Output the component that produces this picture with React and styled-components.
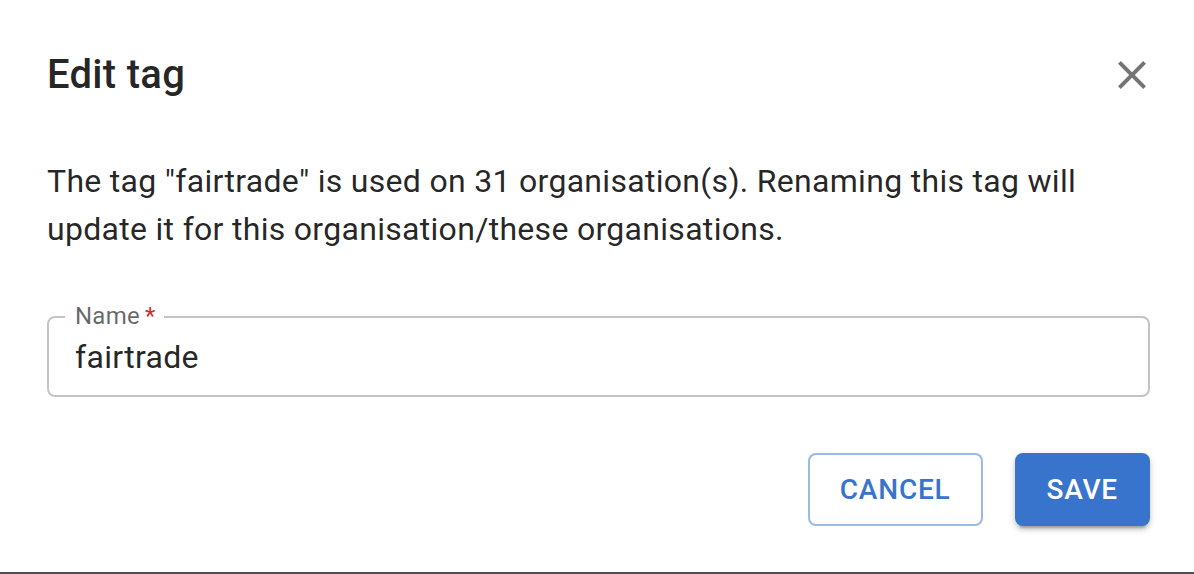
import styled, { createGlobalStyle } from 'styled-components';

const GlobalStyle = createGlobalStyle`
  body {
    margin: 0;
    background: #fff;
    font-family: Roboto, "Liberation Sans", Arial, sans-serif;
  }
`

const Dialog = styled.div`
  box-sizing: border-box;
  width: 1194px;
  height: 574px;
  padding: 43px 44px 0 47px;
  background: #fff;
  border-bottom: 2px solid #4d4d4d;
  display: flex;
  flex-direction: column;
`

const Header = styled.div`
  display: flex;
  align-items: center;
  justify-content: space-between;
  height: 64px;
`

const Title = styled.h2`
  margin: 0;
  font-size: 40px;
  font-weight: 500;
  line-height: 64px;
  letter-spacing: 0.0075em;
  color: rgba(0, 0, 0, 0.87);
`

const CloseButton = styled.button`
  width: 48px;
  height: 48px;
  margin-right: -6px;
  padding: 0;
  border: none;
  background: none;
  color: #757575;
  display: flex;
  align-items: center;
  justify-content: center;
  cursor: pointer;
`

const Message = styled.p`
  margin: 50px 0 0;
  font-size: 32px;
  line-height: 48px;
  letter-spacing: 0.00938em;
  color: rgba(0, 0, 0, 0.87);
`

const Field = styled.div`
  position: relative;
  margin-top: 64px;
  height: 80px;
`

const Outline = styled.fieldset`
  position: absolute;
  inset: -10px 0 0 0;
  margin: 0;
  padding: 0 16px;
  border: 2px solid #c4c4c4;
  border-radius: 8px;
  pointer-events: none;
`

const Notch = styled.legend`
  padding: 0 10px;
  font-size: 24px;
  line-height: 20px;
  visibility: hidden;
  white-space: nowrap;
`

const Label = styled.label`
  position: absolute;
  left: 28px;
  top: -18px;
  font-size: 24px;
  line-height: 34px;
  letter-spacing: 0.00938em;
  color: rgba(0, 0, 0, 0.6);
`

const Required = styled.span`
  color: #d32f2f;
`

const Input = styled.input`
  box-sizing: border-box;
  width: 100%;
  height: 80px;
  padding: 17px 28px;
  border: none;
  outline: none;
  background: transparent;
  font-family: inherit;
  font-size: 32px;
  letter-spacing: 0.00938em;
  color: rgba(0, 0, 0, 0.87);
`

const Actions = styled.div`
  display: flex;
  justify-content: flex-end;
  gap: 32px;
  margin-top: 56px;
`

const Button = styled.button`
  box-sizing: border-box;
  height: 73px;
  min-width: 128px;
  border-radius: 8px;
  font-family: inherit;
  font-size: 28px;
  font-weight: 500;
  line-height: 49px;
  letter-spacing: 0.02857em;
  text-transform: uppercase;
  cursor: pointer;
  padding: ${p => (p.$contained ? '12px 32px' : '10px 30px')};
  color: ${p => (p.$contained ? '#fff' : '#3873cc')};
  background: ${p => (p.$contained ? '#3873cc' : '#fff')};
  border: ${p => (p.$contained ? 'none' : '2px solid rgba(56, 115, 204, 0.5)')};
  box-shadow: ${p =>
    p.$contained
      ? '0 6px 2px -4px rgba(0,0,0,0.2), 0 4px 4px 0 rgba(0,0,0,0.14), 0 2px 10px 0 rgba(0,0,0,0.12)'
      : 'none'};
`

const CloseIcon = () => (
  <svg width="48" height="48" viewBox="0 0 24 24" fill="currentColor">
    <path d="M19 6.41 17.59 5 12 10.59 6.41 5 5 6.41 10.59 12 5 17.59 6.41 19 12 13.41 17.59 19 19 17.59 13.41 12z" />
  </svg>
)

export default function App() {
  return (
    <>
      <GlobalStyle />
      <Dialog>
        <Header>
          <Title>Edit tag</Title>
          <CloseButton aria-label="close">
            <CloseIcon />
          </CloseButton>
        </Header>
        <Message>
          The tag "fairtrade" is used on 31 organisation(s). Renaming this tag will
          update it for this organisation/these organisations.
        </Message>
        <Field>
          <Label htmlFor="tag-name">
            Name<Required>{'\u2009*'}</Required>
          </Label>
          <Input id="tag-name" defaultValue="fairtrade" />
          <Outline>
            <Notch>{'Name\u2009*'}</Notch>
          </Outline>
        </Field>
        <Actions>
          <Button>Cancel</Button>
          <Button $contained>Save</Button>
        </Actions>
      </Dialog>
    </>
  );
}
